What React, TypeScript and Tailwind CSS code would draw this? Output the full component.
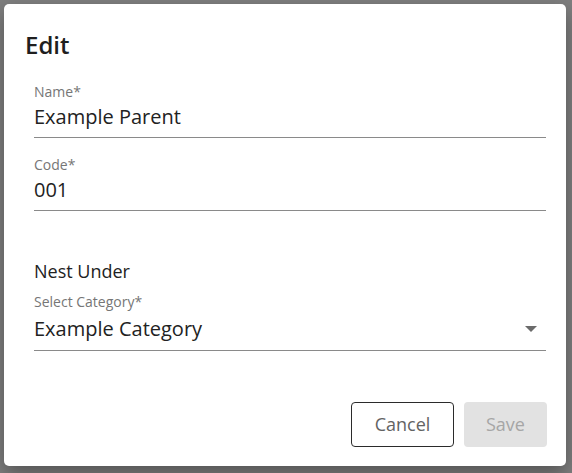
function Field({ label, value, select }: { label: string; value: string; select?: boolean }) {
  return (
    <div className={select ? 'border-b border-[#8a8a8a] pb-[7px]' : 'border-b border-[#8a8a8a] pb-[6px]'}>
      <div className="text-[14px] leading-[20px] text-[#767676]">{label}</div>
      <div
        className={
          select
            ? 'mt-[3px] flex items-center justify-between text-[20px] leading-[28px] text-[#222]'
            : 'mt-[1px] flex items-center justify-between text-[20px] leading-[28px] text-[#222]'
        }
      >
        <span>{value}</span>
        {select && (
          <svg width="12" height="7" viewBox="0 0 12 7" className="mr-[9px]">
            <path d="M0 0h12L6 6z" fill="#6b6b6b" />
          </svg>
        )}
      </div>
    </div>
  );
}

export default function App() {
  return (
    <div
      className="h-[473px] w-[572px] overflow-hidden bg-[#7f7f7f] p-[4px] pr-[6px]"
      style={{ fontFamily: '"Open Sans", "Noto Sans", sans-serif' }}
    >
      <div className="flex h-[462px] w-[562px] flex-col rounded-[5px] bg-white pb-[19px] pl-[30px] pr-[19px] pt-[24px] shadow-[0_8px_20px_rgba(0,0,0,0.35)]">
        <h2 className="-ml-[9px] text-[24px] font-semibold leading-[33px] text-[#1f1f1f]">Edit</h2>
        <div className="mt-[21px] flex flex-col gap-[17px] pr-[1px]">
          <Field label="Name*" value="Example Parent" />
          <Field label="Code*" value="001" />
        </div>
        <div className="mt-[47px] text-[18px] leading-[26px] text-[#222]">Nest Under</div>
        <div className="mt-[8px] pr-[1px]">
          <Field label="Select Category*" value="Example Category" select />
        </div>
        <div className="mt-auto flex justify-end gap-[10px]">
          <button className="h-[45px] w-[103px] rounded-[4px] border border-[#2b2b2b] text-[18px] text-[#636363]">
            Cancel
          </button>
          <button className="h-[45px] w-[83px] rounded-[4px] bg-[#e2e2e2] text-[18px] text-[#a6a6a6]">
            Save
          </button>
        </div>
      </div>
    </div>
  );
}
